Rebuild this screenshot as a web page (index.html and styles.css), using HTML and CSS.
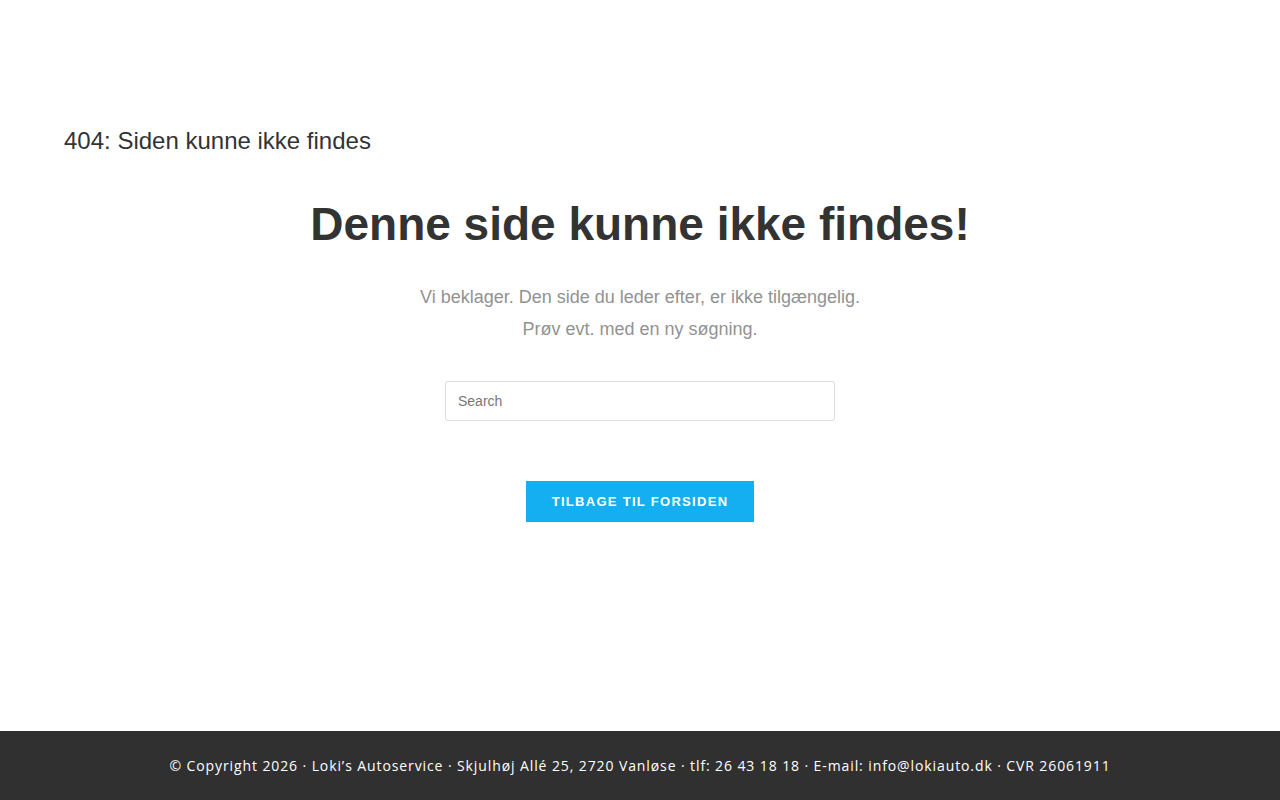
FILE: index.html
```html
<!DOCTYPE html>
<html lang="da">
  <head>
    <meta charset="UTF-8">
    <meta name="viewport" content="width=device-width, initial-scale=1.0">
    <title>404: Siden kunne ikke findes</title>
    <link rel="stylesheet" href="styles.css">
  </head>
  <body>
    <div class="site">
      <!-- Page header -->
      <header class="page-header">
        <h1 class="page-title">404: Siden kunne ikke findes</h1>
      </header>
      <!-- Error content -->
      <main class="error-page">
        <h2 class="error-title">Denne side kunne ikke findes!</h2>
        <p class="error-text">Vi beklager. Den side du leder efter, er ikke tilgængelig.<br>Prøv evt. med en ny søgning.</p>
        <form class="search-form">
          <input type="search" class="search-field" placeholder="Search">
        </form>
        <a href="#" class="error-btn">Tilbage til forsiden</a>
      </main>
    </div>
    <!-- Footer -->
    <footer class="site-footer">
      <p>© Copyright 2026 · Loki’s Autoservice · Skjulhøj Allé 25, 2720 Vanløse · tlf: 26 43 18 18 · E-mail: info@lokiauto.dk · CVR 26061911</p>
    </footer>
  </body>
</html>
```

FILE: styles.css
```css
/* General */
body {
  margin: 0;
  font-family: Arial, "Liberation Sans", sans-serif;
  color: #333;
  background: #fff;
}

.site {
  min-height: 731px;
  display: flex;
  flex-direction: column;
}

/* Page header */
.page-header {
  padding: 124px 64px 0;
}

.page-title {
  margin: 0;
  font-size: 24px;
  font-weight: 400;
  line-height: 34px;
  color: #333;
}

/* Error content */
.error-page {
  display: flex;
  flex-direction: column;
  align-items: center;
  text-align: center;
  padding-top: 42px;
}

.error-title {
  margin: 0;
  font-size: 46px;
  font-weight: 700;
  line-height: 48px;
  color: #333;
}

.error-text {
  margin: 33px 0 0;
  font-size: 18px;
  line-height: 32px;
  color: #929292;
}

.search-form {
  margin-top: 36px;
}

.search-field {
  box-sizing: border-box;
  width: 390px;
  height: 40px;
  padding: 0 12px;
  border: 1px solid #ddd;
  border-radius: 3px;
  font-family: inherit;
  font-size: 14px;
  color: #666;
  outline: none;
}

.search-field::placeholder {
  color: #777;
}

.error-btn {
  margin-top: 60px;
  display: inline-block;
  padding: 0 26px;
  height: 41px;
  line-height: 41px;
  background: #13aff0;
  color: #fff;
  font-size: 13px;
  font-weight: 700;
  letter-spacing: 1.3px;
  text-transform: uppercase;
  text-decoration: none;
}

/* Footer */
.site-footer {
  background: #303030;
  height: 69px;
  display: flex;
  align-items: center;
  justify-content: center;
}

.site-footer p {
  margin: 0;
  font-family: "Open Sans", sans-serif;
  font-size: 14px;
  font-weight: 500;
  letter-spacing: 0.9px;
  color: #fff;
}
```
